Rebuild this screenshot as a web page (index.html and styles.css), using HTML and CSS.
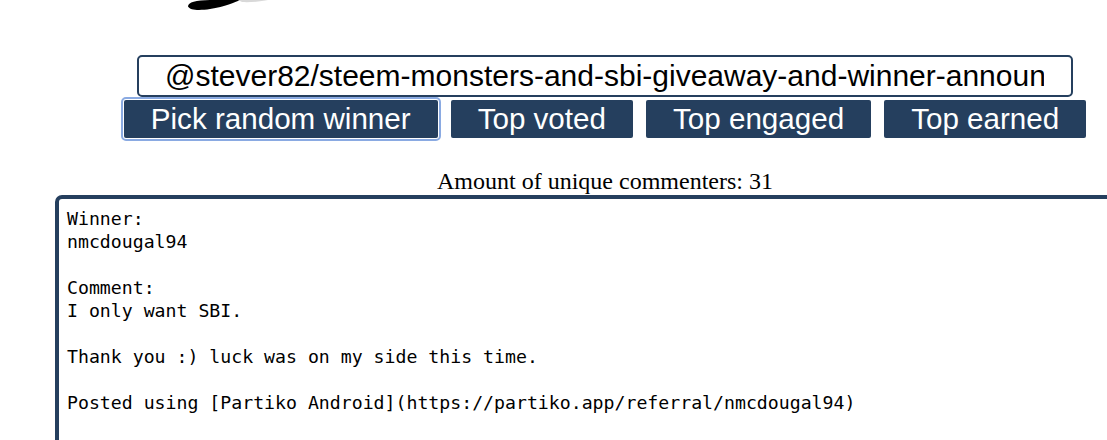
FILE: index.html
```html
<!DOCTYPE html>
<html lang="en">
<head>
<meta charset="utf-8">
<title>Steem giveaway picker</title>
<link rel="stylesheet" href="styles.css">
</head>
<body>
<div class="page">
  <header class="logo">
    <svg class="logo-mark" width="100" height="14" viewBox="0 0 100 14" aria-hidden="true">
      <path d="M8,6.5 C8,2 16,0.5 30,0 L60,0 C55,2 45,7 30,9 C20,10.5 10,10.5 8,6.5 Z" fill="#000"/>
      <path d="M58,0 L88,0 C82,1.5 70,2.5 62,2 Z" fill="#d8d8d8"/>
    </svg>
  </header>
  <main class="main">
    <input class="permlink" type="text" value="@stever82/steem-monsters-and-sbi-giveaway-and-winner-announcement">
    <div class="actions">
      <button class="btn btn-focus" type="button">Pick random winner</button>
      <button class="btn" type="button">Top voted</button>
      <button class="btn" type="button">Top engaged</button>
      <button class="btn" type="button">Top earned</button>
    </div>
    <p class="count">Amount of unique commenters: 31</p>
    <div class="result">Winner:
nmcdougal94

Comment:
I only want SBI.

Thank you :) luck was on my side this time.

Posted using [Partiko Android](https://partiko.app/referral/nmcdougal94)
</div>
  </main>
</div>
</body>
</html>
```

FILE: styles.css
```css
html, body {
  margin: 0;
  padding: 0;
  overflow: hidden;
  background: #fff;
}

.page {
  width: 1210px;
}

.logo {
  height: 55px;
}

.logo-mark {
  display: block;
  margin-left: 180px;
}

.main {
  display: flex;
  flex-direction: column;
  align-items: center;
}

.permlink {
  box-sizing: border-box;
  width: 936px;
  height: 42px;
  margin: 0;
  padding: 0 27px 0 26px;
  border: 2px solid #253f5e;
  border-radius: 5px;
  font-family: "Liberation Sans", Arial, sans-serif;
  font-size: 30px;
  color: #000;
  background: #fff;
  outline: none;
}

.actions {
  display: flex;
  gap: 13px;
  margin-top: 3px;
}

.btn {
  box-sizing: border-box;
  height: 38px;
  margin: 0;
  padding: 0 27px;
  border: none;
  border-radius: 2px;
  background: #253f5e;
  color: #fff;
  font-family: "Liberation Sans", Arial, sans-serif;
  font-size: 29.6px;
  line-height: 38px;
}

.btn-focus {
  outline: 2px solid #8aaae2;
  outline-offset: 1px;
}

.count {
  margin: 30px 0 0;
  font-family: "Liberation Serif", "Times New Roman", serif;
  font-size: 24px;
  line-height: 27px;
  color: #000;
}

.result {
  box-sizing: border-box;
  align-self: flex-start;
  width: 1100px;
  height: 300px;
  margin-left: 55px;
  padding: 8px 8px;
  border: 4px solid #253f5e;
  border-radius: 7px;
  white-space: pre-wrap;
  text-align: left;
  font-family: "DejaVu Sans Mono", monospace;
  font-size: 18.2px;
  line-height: 23px;
  color: #000;
}
```
